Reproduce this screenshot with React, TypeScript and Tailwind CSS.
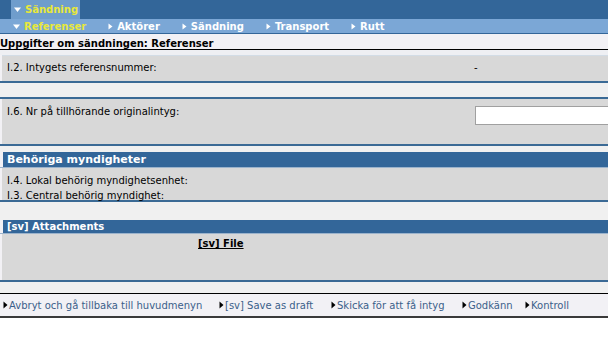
import React from 'react';

const Arrow: React.FC<{ down?: boolean; className?: string }> = ({ down, className }) => (
  <svg width="7" height="7" viewBox="0 0 7 7" className={className}>
    {down ? <path d="M0 1.5h7L3.5 6z" fill="currentColor" /> : <path d="M1.5 0.5v6L5.5 3.5z" fill="currentColor" />}
  </svg>
);

const font = { fontFamily: '"DejaVu Sans", Verdana, sans-serif' };

const Line: React.FC<{ className?: string }> = ({ className }) => <div className={className ?? 'h-[2px] bg-[#3b6a95]'} />;

const App: React.FC = () => {
  const tabs = ['Aktörer', 'Sändning', 'Transport', 'Rutt'];
  const footer = [
    { t: 'Avbryt och gå tillbaka till huvudmenyn', w: 'w-[216px]' },
    { t: '[sv] Save as draft', w: 'w-[112px]' },
    { t: 'Skicka för att få intyg', w: 'w-[131px]' },
    { t: 'Godkänn', w: 'w-[63px]' },
    { t: 'Kontroll', w: '' },
  ];
  return (
    <div className="w-[608px] h-[337px] bg-white overflow-hidden text-[10px] text-black" style={font}>
      {/* top menu */}
      <div className="h-[19px] bg-[#336699] pl-[11px] flex">
        <div className="h-full w-[69px] bg-[#6f9dcc] pl-[3px] flex items-center gap-[4px] font-bold text-[10px] text-[#e8e83a]">
          <Arrow down className="text-white" />
          <span>Sändning</span>
        </div>
      </div>
      <div className="h-[15px] bg-[#7ba7d6] border-b border-[#336699] flex items-center pl-[13px] font-bold text-[10px] text-white">
        <div className="flex items-center gap-[4px] text-[#e8e83a] mr-[21px]">
          <Arrow down className="text-white" />
          <span>Referenser</span>
        </div>
        {tabs.map((t) => (
          <div key={t} className="flex items-center gap-[3px] mr-[21px]">
            <Arrow />
            <span>{t}</span>
          </div>
        ))}
      </div>

      <div className="bg-[#f2f1f5]">
        <div className="h-[15px] flex items-end font-bold text-[10px] leading-none">Uppgifter om sändningen: Referenser</div>
        <Line className="h-px bg-black" />
        <div className="h-[5px] bg-[#eeeff3]" />
        <div className="pl-[2px]">
          <div className="h-[26px] bg-[#d8d8d8] border-t border-[#d2dce6] flex items-center pl-[5px] pb-[2px]">
            <span className="w-[467px]">I.2. Intygets referensnummer:</span>
            <span>-</span>
          </div>
        </div>
        <Line />
        <div className="h-[14px] bg-[#f0f0f0]" />
        <Line />
        <div className="pl-[2px]">
          <div className="h-[45px] bg-[#d8d8d8] flex items-start pl-[5px] pt-[5px]">
            <span className="w-[468px]">I.6. Nr på tillhörande originalintyg:</span>
            <div className="flex-1 h-[19px] mt-[2px] bg-white border border-[#a0a0a0] border-r-0" />
          </div>
        </div>
        <Line />
        <div className="h-[6px] bg-[#f0f0f0]" />
        <div className="pl-[3px]">
          <div className="h-[15px] bg-[#336699] text-white font-bold text-[11px] leading-[15px] pl-[4px]">Behöriga myndigheter</div>
        </div>
        <Line className="h-px bg-[#9bb3cc]" />
        <div className="pl-[2px]">
          <div className="h-[32px] bg-[#d8d8d8] pl-[5px] pt-[7px] flex flex-col gap-[3px]">
            <span className="leading-[12px]">I.4. Lokal behörig myndighetsenhet:</span>
            <span className="leading-[12px]">I.3. Central behörig myndighet:</span>
          </div>
        </div>
        <Line />
        <div className="h-[18px] bg-[#f0f0f0]" />
        <div className="pl-[3px]">
          <div className="h-[13px] bg-[#336699] text-white font-bold text-[10px] leading-[13px] pl-[4px]">[sv] Attachments</div>
        </div>
        <Line className="h-px bg-[#9bb3cc]" />
        <div className="pl-[2px]">
          <div className="h-[46px] bg-[#d8d8d8] pt-[2px]">
            <span className="ml-[196px] font-bold underline">[sv] File</span>
          </div>
        </div>
        <Line />
        <div className="h-[11px] bg-[#f0f0f0]" />
        <div className="h-[25px] border-t border-black border-b-2 border-b-[#3a3a3a] flex items-center pl-[3px] text-[#3b5f8a]">
          {footer.map((f) => (
            <div key={f.t} className={`flex items-center shrink-0 ${f.w}`}>
              <svg width="5" height="8" viewBox="0 0 5 8" className="mr-[1px]">
                <path d="M0.5 0.5v7L4.5 4z" fill="#000" />
              </svg>
              <span>{f.t}</span>
            </div>
          ))}
        </div>
      </div>
    </div>
  );
};

export default App;
